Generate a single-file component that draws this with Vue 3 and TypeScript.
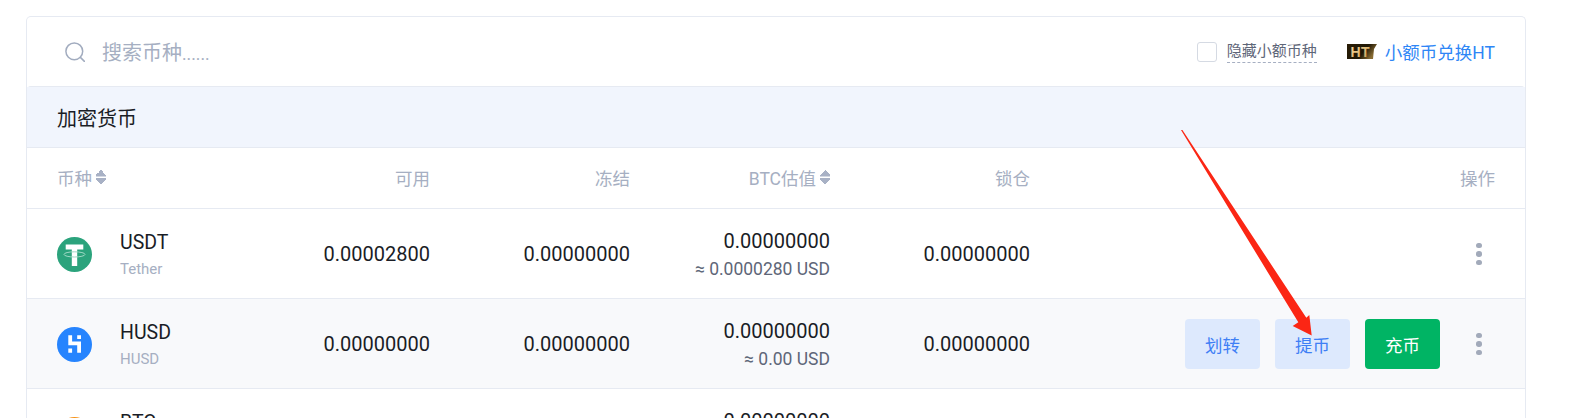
<script setup lang="ts">
interface Coin {
  symbol: string;
  name: string;
  available: string;
  frozen: string;
  btc: string;
  usd: string;
  locked: string;
  actions?: boolean;
}

const coins: Coin[] = [
  { symbol: "USDT", name: "Tether", available: "0.00002800", frozen: "0.00000000", btc: "0.00000000", usd: "≈ 0.0000280 USD", locked: "0.00000000" },
  { symbol: "HUSD", name: "HUSD", available: "0.00000000", frozen: "0.00000000", btc: "0.00000000", usd: "≈ 0.00 USD", locked: "0.00000000", actions: true },
  { symbol: "BTC", name: "Bitcoin", available: "0.00000000", frozen: "0.00000000", btc: "0.00000000", usd: "≈ 0.00 USD", locked: "0.00000000" },
];
</script>

<template>
  <div class="page">
    <div class="card">
      <div class="toolbar">
        <svg class="search-icon" viewBox="0 0 20 20" fill="none" stroke="currentColor" stroke-width="1.5" aria-hidden="true">
          <circle cx="9.3" cy="9.3" r="8.4" />
          <line x1="15.4" y1="15.4" x2="19.4" y2="19.4" stroke-linecap="round" />
        </svg>
        <span class="search-text">搜索币种<span class="dots">......</span></span>
        <span class="checkbox"></span>
        <span class="hide-label">隐藏小额币种</span>
        <svg class="ht-logo" viewBox="0 0 30 15" aria-hidden="true">
          <defs>
            <linearGradient id="ht-bg" x1="0" x2="1" y1="0" y2="0.4">
              <stop offset="0" stop-color="#2a1d06" />
              <stop offset="0.65" stop-color="#1f1705" />
              <stop offset="1" stop-color="#8a6d33" />
            </linearGradient>
            <linearGradient id="ht-gold" x1="0" x2="1" y1="0" y2="1">
              <stop offset="0" stop-color="#f7dca0" />
              <stop offset="1" stop-color="#c99f55" />
            </linearGradient>
          </defs>
          <polygon points="0,0 30,0 27,5 26,15 0,15" fill="url(#ht-bg)" />
          <text x="3.5" y="12.5" textLength="19" class="ht-text" fill="url(#ht-gold)">HT</text>
        </svg>
        <span class="convert-link">小额币兑换HT</span>
      </div>

      <div class="table">
        <div class="group-title">加密货币</div>
        <div class="row head">
          <div class="sortable">币种<i class="sort"></i></div>
          <div class="num">可用</div>
          <div class="num">冻结</div>
          <div class="num sortable end">BTC估值<i class="sort"></i></div>
          <div class="num">锁仓</div>
          <div class="num">操作</div>
        </div>

        <div v-for="coin in coins" :key="coin.symbol" class="row body" :class="{ active: coin.actions }">
          <div class="coin">
            <svg v-if="coin.symbol === 'USDT'" class="coin-icon" viewBox="0 0 35 35" aria-hidden="true">
              <circle cx="17.5" cy="17.5" r="17.5" fill="#2ba37c" />
              <path d="M8.7 7.5h17.6v5h-6.1v4h-5.4v-4H8.7zM14.8 16h5.4v13h-5.4z" fill="#fff" />
              <ellipse cx="17.5" cy="17.4" rx="10.5" ry="2.6" fill="none" stroke="#9fd8c4" stroke-width="1" />
            </svg>
            <svg v-else-if="coin.symbol === 'HUSD'" class="coin-icon" viewBox="0 0 35 35" aria-hidden="true">
              <circle cx="17.5" cy="17.5" r="17.5" fill="#2684fe" />
              <path d="M11.3 8.3h3.8v6.2H24v11.2h-3.8v-7.4h-8.9zM20.2 8.3H24v3.6h-3.8zM11.3 21.6h3.8v4.1h-3.8z" fill="#fff" />
            </svg>
            <svg v-else class="coin-icon" viewBox="0 0 35 35" aria-hidden="true">
              <circle cx="17.5" cy="17.5" r="17.5" fill="#f7931a" />
            </svg>
            <div class="coin-names">
              <div class="symbol">{{ coin.symbol }}</div>
              <div class="fullname">{{ coin.name }}</div>
            </div>
          </div>
          <div class="num value">{{ coin.available }}</div>
          <div class="num value">{{ coin.frozen }}</div>
          <div class="num">
            <div class="value">{{ coin.btc }}</div>
            <div class="usd">{{ coin.usd }}</div>
          </div>
          <div class="num value">{{ coin.locked }}</div>
          <div class="actions">
            <template v-if="coin.actions">
              <button type="button" class="btn soft">划转</button>
              <button type="button" class="btn soft">提币</button>
              <button type="button" class="btn solid">充币</button>
            </template>
            <span class="more"><i></i><i></i><i></i></span>
          </div>
        </div>
      </div>
    </div>

    <svg class="annotation" viewBox="0 0 1570 418" aria-hidden="true">
      <polygon points="1181,130 1182.4,130 1306.3,317.7 1309.3,315 1311.7,335.5 1292.7,326 1298.3,322.3" fill="#fb2614" />
    </svg>
  </div>
</template>

<style>
html,
body {
  margin: 0;
  height: 418px;
  overflow: hidden;
  background: #fff;
}
</style>

<style scoped>
.page {
  position: relative;
  width: 1570px;
  height: 418px;
  overflow: hidden;
  padding: 16px 44px 0 26px;
  box-sizing: border-box;
  font-family: Roboto, "Noto Sans CJK SC", sans-serif;
}

.card {
  border: 1px solid #e6eaf2;
  border-bottom: 0;
  border-radius: 5px 5px 0 0;
}

.toolbar {
  height: 69px;
  display: flex;
  align-items: center;
  padding: 0 30px 0 38px;
  box-sizing: border-box;
}

.search-icon {
  width: 20px;
  height: 20px;
  color: #a2acbf;
  flex-shrink: 0;
}

.search-text {
  margin-left: 17px;
  font-size: 20px;
  color: #a6afc2;
  flex: 1;
}

.dots {
  font-size: 17.5px;
}

.checkbox {
  width: 20px;
  height: 20px;
  box-sizing: border-box;
  border: 1.5px solid #d5dae3;
  border-radius: 3px;
}

.hide-label {
  margin-left: 10px;
  font-size: 15px;
  line-height: 21px;
  color: #5e6678;
  border-bottom: 1px dashed #a6afc2;
}

.ht-logo {
  margin-left: 30px;
  width: 30px;
  height: 15px;
}

.ht-text {
  font-family: "Liberation Sans", sans-serif;
  font-size: 14px;
  font-weight: 700;
}

.convert-link {
  margin-left: 8px;
  font-size: 17.5px;
  color: #2e86f6;
}

.table {
  margin: 0 -1px;
  border: 1px solid #e6eaf2;
  border-bottom: 0;
  border-radius: 5px 5px 0 0;
}

.group-title {
  height: 60px;
  display: flex;
  align-items: center;
  padding-left: 30px;
  font-size: 20px;
  color: #1a1d26;
  background: #f1f5fd;
  border-bottom: 1px solid #e6eaf2;
}

.row {
  display: grid;
  grid-template-columns: 173px repeat(4, 200px) 1fr;
  padding: 0 30px 0 30px;
  align-items: center;
  border-bottom: 1px solid #e6eaf2;
  box-sizing: border-box;
}

.head {
  height: 61px;
  padding-bottom: 2px;
  font-size: 17.5px;
  color: #a6afc2;
}

.body {
  height: 90px;
  padding-top: 1px;
}

.active {
  background: #f8f9fb;
}

.sortable {
  display: flex;
  align-items: center;
}

.end {
  justify-content: flex-end;
}

.sort {
  width: 10px;
  height: 15px;
  margin-left: 4px;
  background:
    conic-gradient(from 135deg at 50% 0, #a8b1c5 90deg, transparent 0) 0 0 / 10px 6.5px no-repeat,
    conic-gradient(from -45deg at 50% 100%, #a8b1c5 90deg, transparent 0) 0 100% / 10px 6.5px no-repeat;
}

.num {
  text-align: right;
}

.coin {
  display: flex;
  align-items: center;
}

.coin-icon {
  width: 35px;
  height: 35px;
  flex-shrink: 0;
}

.coin-names {
  margin-left: 28px;
  padding-top: 1px;
}

.symbol {
  font-size: 19.5px;
  line-height: 26px;
  color: #1a1d26;
}

.fullname {
  margin-top: 3px;
  font-size: 15px;
  line-height: 20px;
  color: #a6afc2;
}

.value {
  font-size: 20px;
  line-height: 26px;
  color: #1a1d26;
}

.usd {
  margin-top: 4px;
  font-size: 17.5px;
  line-height: 22px;
  color: #5e6678;
}

.actions {
  display: flex;
  align-items: center;
  justify-content: flex-end;
  gap: 15px;
}

.btn {
  width: 75px;
  height: 50px;
  padding: 0;
  border: 0;
  border-radius: 4px;
  font-family: inherit;
  font-size: 17.5px;
}

.soft {
  background: #dde9fd;
  color: #3f7ff5;
}

.solid {
  background: #00b464;
  color: #fff;
}

.more {
  width: 24px;
  margin-left: 12px;
  display: flex;
  flex-direction: column;
  align-items: center;
  gap: 3px;
  margin-right: 4px;
}

.more i {
  width: 5.5px;
  height: 5.5px;
  border-radius: 50%;
  background: #a2aaba;
}

.annotation {
  position: absolute;
  inset: 0;
  width: 1570px;
  height: 418px;
  pointer-events: none;
}
</style>
